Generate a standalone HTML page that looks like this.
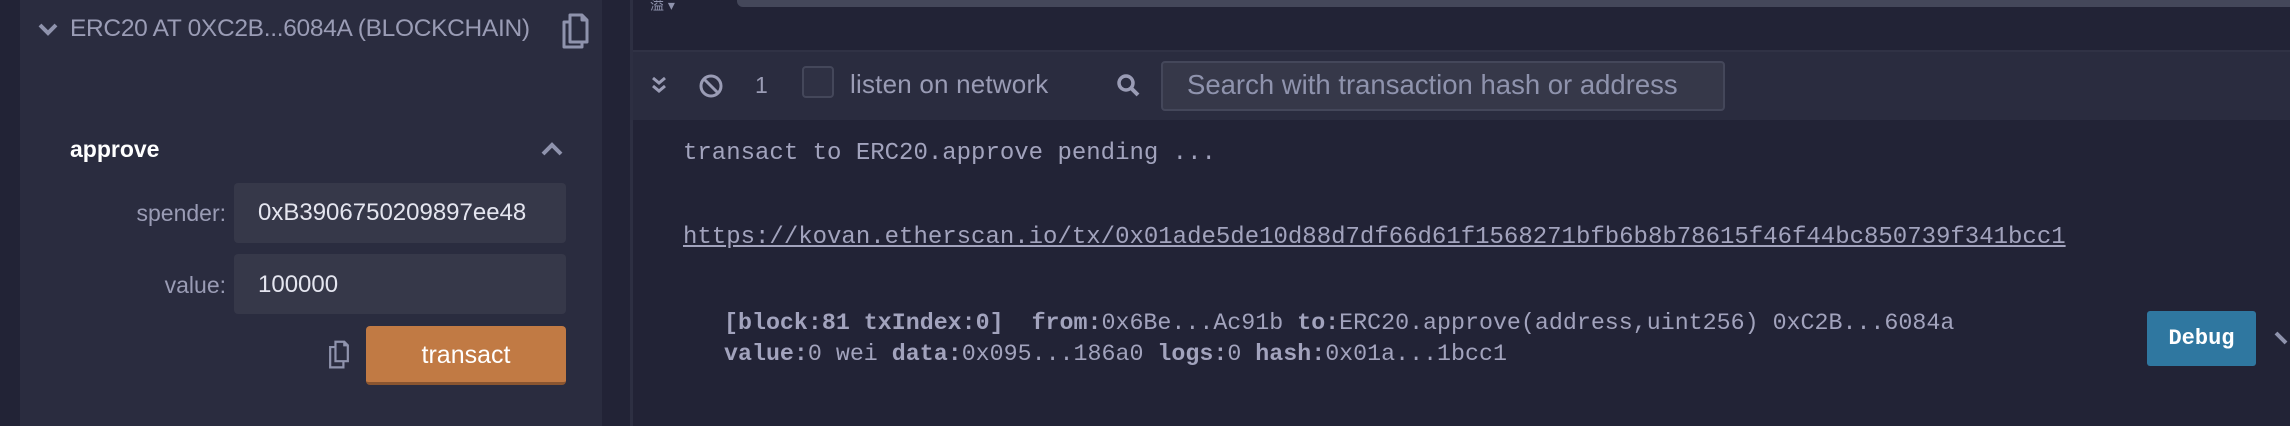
<!DOCTYPE html>
<html><head><style>
*{margin:0;padding:0;box-sizing:border-box}
html,body{width:2290px;height:426px;overflow:hidden}
body{background:#222336;font-family:"Liberation Sans",sans-serif;position:relative}
.a{position:absolute}
.mono{font-family:"Liberation Mono",monospace;color:#a2a3bd;font-size:24px;white-space:pre}
.mono b{font-weight:bold}
</style></head><body>
<div class="a" style="left:20px;top:0;width:582px;height:426px;background:#2a2c3f"></div>
<div class="a" style="left:630px;top:0;width:3px;height:426px;background:#2d2f42"></div>

<svg class="a" style="left:38px;top:22px" width="20" height="14" viewBox="0 0 20 14"><path d="M2 3l8 8 8-8" stroke="#8f93ad" stroke-width="4" fill="none"/></svg>
<div class="a" style="left:70px;top:15px;font-size:24.5px;color:#9a9cb5;letter-spacing:-0.3px">ERC20 AT 0XC2B...6084A (BLOCKCHAIN)</div>
<svg class="a" style="left:560px;top:12px" width="30" height="40" viewBox="0 0 30 40"><path d="M10 3h12l5 5v22H10z M22 3v5h5" stroke="#8f93ad" stroke-width="3" fill="none" stroke-linejoin="round"/><path d="M10 10H4v25h18v-5" stroke="#8f93ad" stroke-width="3" fill="none" stroke-linejoin="round"/></svg>

<div class="a" style="left:70px;top:136px;font-size:23px;font-weight:bold;color:#fff">approve</div>
<svg class="a" style="left:541px;top:142px" width="22" height="14" viewBox="0 0 22 14"><path d="M2 12l9-9 9 9" stroke="#8f93ad" stroke-width="4" fill="none"/></svg>

<div class="a" style="left:100px;top:200px;width:126px;text-align:right;font-size:23px;color:#9a9cb5">spender:</div>
<div class="a" style="left:234px;top:183px;width:332px;height:60px;background:#363849;border-radius:4px"></div>
<div class="a" style="left:258px;top:199px;font-size:24px;color:#e4e5ef">0xB3906750209897ee48</div>
<div class="a" style="left:100px;top:272px;width:126px;text-align:right;font-size:23px;color:#9a9cb5">value:</div>
<div class="a" style="left:234px;top:254px;width:332px;height:60px;background:#363849;border-radius:4px"></div>
<div class="a" style="left:258px;top:271px;font-size:24px;color:#e4e5ef">100000</div>

<svg class="a" style="left:326px;top:340px" width="26" height="30" viewBox="0 0 26 34"><path d="M9 2h10l4 4v18H9z M19 2v4h4" stroke="#8f93ad" stroke-width="2.5" fill="none"/><path d="M9 8H3v23h15v-7" stroke="#8f93ad" stroke-width="2.5" fill="none"/></svg>
<div class="a" style="left:366px;top:326px;width:200px;height:59px;background:#c17a44;border-radius:4px;border-bottom:3px solid #8a5530"></div>
<div class="a" style="left:366px;top:341px;width:200px;text-align:center;font-size:25px;color:#fff">transact</div>

<div class="a" style="left:650px;top:-5px;font-size:14px;color:#8f93ad">溢 ▾</div>
<div class="a" style="left:737px;top:0;width:1553px;height:7px;background:#44475a;border-radius:0 0 0 6px"></div>
<div class="a" style="left:633px;top:50px;width:1657px;height:70px;background:#2a2c3f;border-top:2px solid #303245"></div>

<svg class="a" style="left:651px;top:75px" width="16" height="20" viewBox="0 0 16 20"><path d="M2 3l6 5 6-5M2 11l6 5 6-5" stroke="#9a9cb5" stroke-width="3" fill="none"/></svg>
<svg class="a" style="left:698px;top:73px" width="26" height="26" viewBox="0 0 26 26"><circle cx="13" cy="13" r="10" stroke="#9a9cb5" stroke-width="3" fill="none"/><path d="M6 6l14 14" stroke="#9a9cb5" stroke-width="3"/></svg>
<div class="a" style="left:755px;top:72px;font-size:23px;color:#9a9cb5">1</div>
<div class="a" style="left:802px;top:66px;width:32px;height:32px;border:2px solid #44475a;border-radius:4px;background:#2f3144"></div>
<div class="a" style="left:850px;top:69px;font-size:26px;color:#9a9cb5;letter-spacing:0.2px">listen on network</div>
<svg class="a" style="left:1116px;top:73px" width="26" height="26" viewBox="0 0 26 26"><circle cx="10" cy="10" r="7" stroke="#9a9cb5" stroke-width="3.5" fill="none"/><path d="M15 15l7 7" stroke="#9a9cb5" stroke-width="4"/></svg>
<div class="a" style="left:1161px;top:61px;width:564px;height:50px;background:#363849;border:2px solid #44475a;border-radius:4px"></div>
<div class="a" style="left:1187px;top:69px;font-size:27.5px;color:#8f93ad">Search with transaction hash or address</div>

<div class="a mono" style="left:683px;top:140px;font-size:24px">transact to ERC20.approve pending ...</div>
<div class="a mono" style="left:683px;top:224px;text-decoration:underline;font-size:24px">https://kovan.etherscan.io/tx/0x01ade5de10d88d7df66d61f1568271bfb6b8b78615f46f44bc850739f341bcc1</div>
<div class="a mono" style="left:724px;top:310px;font-size:23.3px"><b>[block:81 txIndex:0]</b>  <b>from:</b>0x6Be...Ac91b <b>to:</b>ERC20.approve(address,uint256) 0xC2B...6084a</div>
<div class="a mono" style="left:724px;top:341px;font-size:23.3px"><b>value:</b>0 wei <b>data:</b>0x095...186a0 <b>logs:</b>0 <b>hash:</b>0x01a...1bcc1</div>

<div class="a" style="left:2147px;top:311px;width:109px;height:55px;background:#2f77a0;border-radius:3px;color:#fff;font-family:'Liberation Mono',monospace;font-weight:bold;font-size:22px;text-align:center;line-height:55px">Debug</div>
<svg class="a" style="left:2274px;top:330px" width="16" height="20" viewBox="0 0 16 20"><path d="M2 3l10 10" stroke="#8f93ad" stroke-width="4"/></svg>
</body></html>
